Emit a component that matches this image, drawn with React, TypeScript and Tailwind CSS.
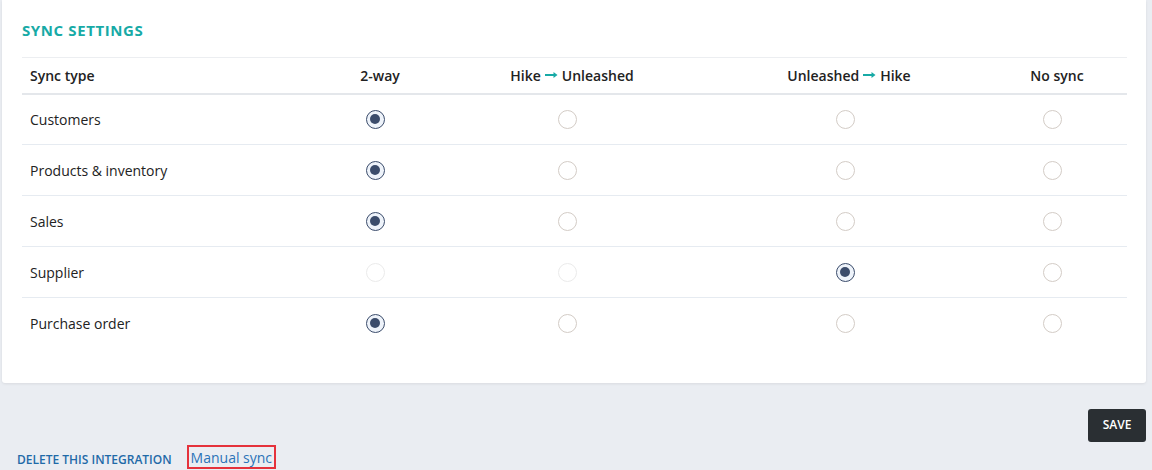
import React from "react";

type Choice = "two" | "h2u" | "u2h" | "none";

const rows: { label: string; value: Choice; disabled?: Choice[] }[] = [
  { label: "Customers", value: "two" },
  { label: "Products & inventory", value: "two" },
  { label: "Sales", value: "two" },
  { label: "Supplier", value: "u2h", disabled: ["two", "h2u"] },
  { label: "Purchase order", value: "two" },
];

const cols: Choice[] = ["two", "h2u", "u2h", "none"];

function Arrow() {
  return (
    <svg width="13" height="8" viewBox="0 0 13 8" className="mx-[4px] inline-block">
      <path d="M0 4h10" stroke="#17aaa6" strokeWidth="2" />
      <path d="M8.5 1L12.5 4L8.5 7Z" fill="#17aaa6" />
    </svg>
  );
}

function Radio({ checked, disabled }: { checked: boolean; disabled?: boolean }) {
  if (checked) {
    return (
      <span className="mx-auto flex h-[19px] w-[19px] items-center justify-center rounded-full border border-[#3b4c6b] bg-[#eef3fa]">
        <span className="h-[10px] w-[10px] rounded-full bg-[#3b4c6b]" />
      </span>
    );
  }
  return (
    <span
      className={
        disabled
          ? "mx-auto block h-[19px] w-[19px] rounded-full border border-[#ebebeb] bg-white"
          : "mx-auto block h-[19px] w-[19px] rounded-full border border-[#d3ccc6] bg-white"
      }
    />
  );
}

export default function App() {
  return (
    <div
      className="h-[470px] w-full overflow-hidden bg-[#eaedf2] text-[#222]"
      style={{ fontFamily: '"Open Sans", "Noto Sans", sans-serif' }}
    >
      <div className="ml-[2px] w-[1144px] rounded-b-[3px] bg-white pb-[34px] pl-[20px] pr-[19px] pt-[20px] shadow-[0_1px_3px_rgba(0,0,0,0.08)]">
        <h2 className="text-[15px] font-bold leading-[20px] tracking-[0.6px] text-[#17aaa6]">SYNC SETTINGS</h2>
        <table className="mt-[17px] w-full border-collapse text-[14px]">
          <colgroup>
            <col className="w-[315px]" />
            <col className="w-[76px]" />
            <col className="w-[308px]" />
            <col className="w-[256px]" />
            <col className="w-[150px]" />
          </colgroup>
          <thead>
            <tr className="h-[36px] border-b-2 border-t border-b-[#e4e7eb] border-t-[#eceef1]">
              <th className="pl-[8px] text-left font-semibold">Sync type</th>
              <th className="pl-[10px] text-center font-semibold">2-way</th>
              <th className="pl-[10px] text-center font-semibold">
                <span className="inline-flex items-center">Hike<Arrow />Unleashed</span>
              </th>
              <th className="text-center font-semibold">
                <span className="inline-flex items-center">Unleashed<Arrow />Hike</span>
              </th>
              <th className="pl-[10px] text-center font-semibold">No sync</th>
            </tr>
          </thead>
          <tbody>
            {rows.map((r, i) => (
              <tr
                key={r.label}
                className={i < rows.length - 1 ? "h-[51px] border-b border-[#e6ebf1]" : "h-[51px]"}
              >
                <td className="pl-[8px]">{r.label}</td>
                {cols.map((c) => (
                  <td key={c} className={c === "u2h" ? "pr-[8px] text-center" : "text-center"}>
                    <Radio checked={r.value === c} disabled={r.disabled?.includes(c)} />
                  </td>
                ))}
              </tr>
            ))}
          </tbody>
        </table>
      </div>

      <div className="mr-[6px] mt-[26px] flex justify-end">
        <button className="h-[33px] w-[58px] rounded-[3px] bg-[#2a2f33] text-[12px] font-semibold text-white">
          SAVE
        </button>
      </div>

      <div className="mt-[3px] flex items-start pl-[17px]">
        <span className="pt-[3px] text-[12px] font-semibold leading-[24px] text-[#1f6aa8]">DELETE THIS INTEGRATION</span>
        <span className="ml-[15px] border-2 border-[#e5323c] px-[2px] pt-[2px] text-[14px] leading-[18px] text-[#2a73b8]">
          Manual sync
        </span>
      </div>
    </div>
  );
}
